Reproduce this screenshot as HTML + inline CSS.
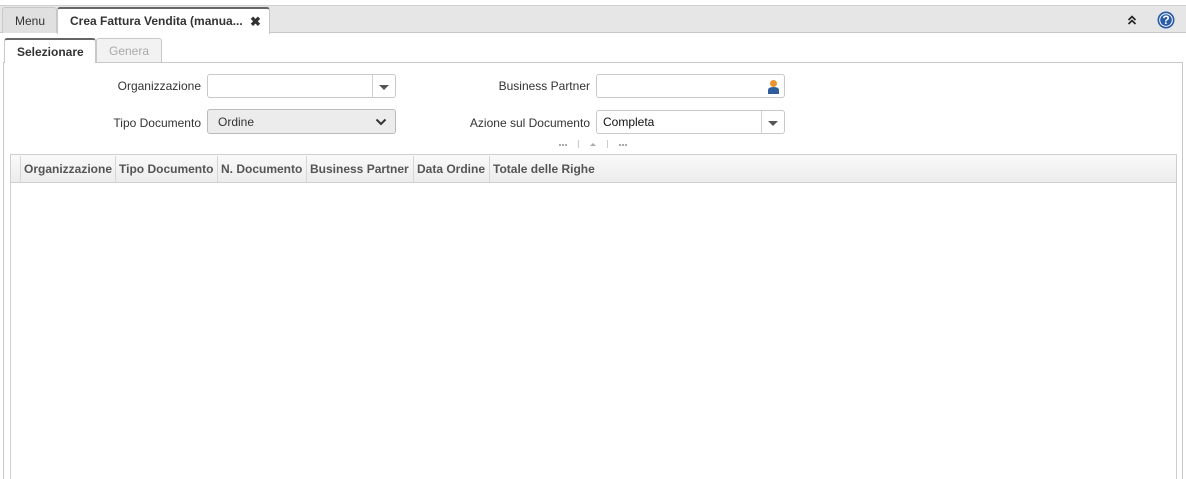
<!DOCTYPE html>
<html><head><style>
*{box-sizing:border-box;margin:0;padding:0}
html,body{width:1186px;height:479px;overflow:hidden}
body{background:#fff;font-family:"Liberation Sans",sans-serif;font-size:12px;color:#333;position:relative}
.a{position:absolute}
.tabbar{left:0;top:5px;width:1186px;height:28px;background:#e6e6e6;border-top:1px solid #d0d0d0;border-bottom:1px solid #c8c8c8}
.tab{top:7px;height:26px;border:1px solid #c8c8c8;border-bottom:none;border-radius:3px 3px 0 0;line-height:26px;font-size:12px;padding:0 12px}
.inp{border:1px solid #c9c9c9;border-radius:3px;background:#fff;height:24px}
.lbl{text-align:right;font-size:12px;color:#333}
.th{top:156px;height:26px;line-height:26px;font-weight:bold;color:#555;font-size:12px;border-right:1px solid #d6d6d6;padding-left:3px}
.caret{width:0;height:0;border-left:5px solid transparent;border-right:5px solid transparent;border-top:5px solid #555}
</style></head><body>
<div class="a tabbar"></div>
<div class="a tab" style="left:2px;width:55px;background:#e0e0e0;color:#333">Menu</div>
<div class="a tab" style="left:57px;width:213px;background:#fff;border-top:2px solid #666;font-weight:bold;color:#333;height:27px;line-height:25px">Crea Fattura Vendita (manua...<span style="position:absolute;left:192px;font-size:13px">✖</span></div>
<svg class="a" style="left:1127px;top:15px" width="10" height="10" viewBox="0 0 10 10"><path d="M1.5 5L5 1.5L8.5 5M1.5 9L5 5.5L8.5 9" stroke="#222" stroke-width="1.6" fill="none"/></svg>
<svg class="a" style="left:1157px;top:11px" width="18" height="18" viewBox="0 0 18 18"><circle cx="9" cy="9" r="8.5" fill="#2a5ca8"/><circle cx="9" cy="9" r="6.8" fill="#fff"/><circle cx="9" cy="9" r="5.8" fill="#2a5ca8"/><text x="9" y="13.2" font-size="12" font-weight="bold" fill="#fff" text-anchor="middle" font-family="Liberation Sans">?</text></svg>
<div class="a" style="left:3px;top:62px;width:1180px;height:420px;border:1px solid #c8c8c8;border-bottom:none"></div>
<div class="a tab" style="left:4px;top:38px;width:92px;height:25px;background:#fff;border-top:2px solid #666;font-weight:bold;line-height:24px;font-size:12px;z-index:2">Selezionare</div>
<div class="a tab" style="left:96px;top:38px;width:66px;height:24px;background:#f2f2f2;color:#aaa;line-height:24px">Genera</div>
<div class="a lbl" style="left:60px;top:79px;width:141px">Organizzazione</div>
<div class="a inp" style="left:207px;top:74px;width:189px"><div class="a" style="left:164px;top:0;height:22px;border-left:1px solid #d0d0d0;width:24px"></div><div class="a caret" style="left:171px;top:10px"></div></div>
<div class="a lbl" style="left:60px;top:116px;width:141px">Tipo Documento</div>
<div class="a inp" style="left:207px;top:109px;width:189px;height:25px;background:#ececec;border-color:#bbb;line-height:25px;padding-left:10px;color:#333">Ordine<svg class="a" style="left:167px;top:8px" width="12" height="8" viewBox="0 0 12 8"><path d="M1.5 1.5L6 6L10.5 1.5" stroke="#333" stroke-width="2" fill="none"/></svg></div>
<div class="a lbl" style="left:440px;top:79px;width:150px">Business Partner</div>
<div class="a inp" style="left:596px;top:74px;width:189px"><svg class="a" style="left:170px;top:4px" width="13" height="15" viewBox="0 0 13 15"><circle cx="6.5" cy="4.5" r="3.5" fill="#e8952d"/><path d="M1 15V11Q1 8 6.5 8Q12 8 12 11V15Z" fill="#2f5c9c"/></svg></div>
<div class="a lbl" style="left:440px;top:116px;width:150px">Azione sul Documento</div>
<div class="a inp" style="left:596px;top:110px;width:189px;line-height:22px;padding-left:6px;color:#111">Completa<div class="a" style="left:164px;top:0;height:22px;border-left:1px solid #d0d0d0;width:24px"></div><div class="a caret" style="left:171px;top:10px"></div></div>
<div class="a" style="left:559px;top:144px;width:8px;height:2px;border-top:2px dotted #aaa"></div>
<div class="a" style="left:578px;top:140px;width:1px;height:8px;background:#ccc"></div>
<div class="a" style="left:590px;top:143px;border-left:3px solid transparent;border-right:3px solid transparent;border-bottom:3px solid #aaa"></div>
<div class="a" style="left:607px;top:140px;width:1px;height:8px;background:#ccc"></div>
<div class="a" style="left:619px;top:144px;width:8px;height:2px;border-top:2px dotted #aaa"></div>
<div class="a" style="left:10px;top:154px;width:1167px;height:330px;border:1px solid #cfcfcf"></div>
<div class="a" style="left:11px;top:155px;width:1165px;height:28px;background:linear-gradient(#fafafa,#ececec);border-bottom:1px solid #d0d0d0"></div>
<div class="a th" style="left:11px;width:10px"></div>
<div class="a th" style="left:21px;width:95px">Organizzazione</div>
<div class="a th" style="left:116px;width:102px">Tipo Documento</div>
<div class="a th" style="left:218px;width:89px">N. Documento</div>
<div class="a th" style="left:307px;width:107px">Business Partner</div>
<div class="a th" style="left:414px;width:76px">Data Ordine</div>
<div class="a th" style="left:490px;width:120px;border-right:none">Totale delle Righe</div>
</body></html>
